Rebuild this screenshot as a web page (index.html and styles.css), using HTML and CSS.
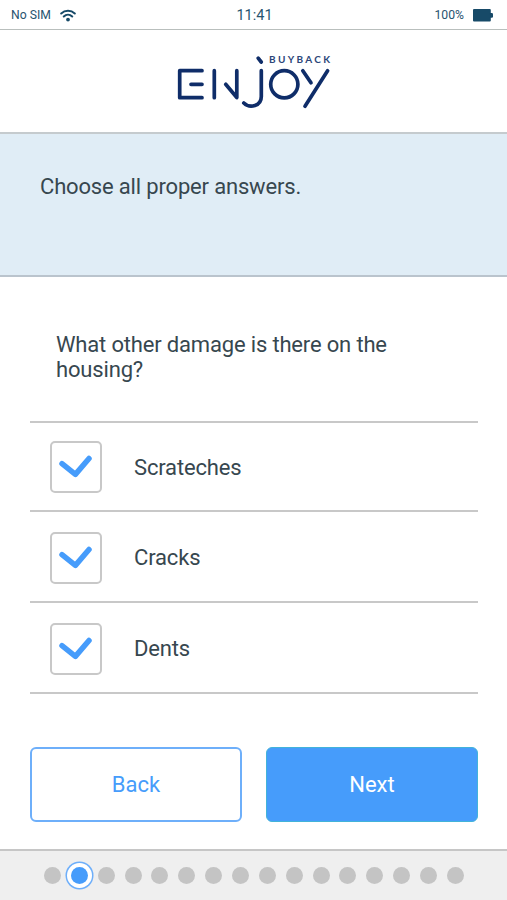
FILE: index.html
```html
<!DOCTYPE html>
<html lang="en">
<head>
    <title>Enjoy Buyback</title>
    <meta charset="utf-8">
    <meta name="viewport" content="width=device-width, initial-scale=1">
    <link rel="stylesheet" href="styles.css">
</head>
<body>
    <div class="status-bar">
        <div class="status-left">
            <span>No SIM</span>
            <svg class="wifi" width="16" height="13" viewBox="0 0 16 13">
                <path d="M1.2 4.5a10 10 0 0 1 13.6 0M3.8 7.5a6.2 6.2 0 0 1 8.4 0"/>
                <circle cx="8" cy="10.6" r="1.9"/>
            </svg>
        </div>
        <div class="status-time">11:41</div>
        <div class="status-right">
            <span>100%</span>
            <svg class="battery" width="20" height="13" viewBox="0 0 20 13">
                <rect x="0" y="0" width="17.8" height="12.6" rx="1"/>
                <rect x="16" y="4" width="4" height="4.8" rx="1.2"/>
            </svg>
        </div>
    </div>

    <div class="header">
        <svg class="logo" width="156" height="60" viewBox="176 52 156 60">
            <path d="M202 70.7H179.7V97.7H202M191 84.3H202"/>
            <path d="M214.3 70.7V97.7M225.7 84.3L236.8 97.5V70.7"/>
            <path d="M258.2 58.2L261.2 62M261.3 70.7V96.5C261.3 106 250 109 243.8 103"/>
            <circle cx="284.3" cy="84.3" r="13.6"/>
            <path d="M302.8 70.7L311 82.8M327.6 70.7L305 106.2"/>
            <text x="269" y="63.4" textLength="61">BUYBACK</text>
        </svg>
    </div>

    <div class="banner">Choose all proper answers.</div>

    <div class="main">
        <div class="question">What other damage is there on the housing?</div>
        <div class="list">
            <div class="item">
                <div class="check"><svg width="34" height="24" viewBox="0 0 34 24"><path d="M3 8.7L16.4 19.4L30 3.5"/></svg></div>
                <span>Scrateches</span>
            </div>
            <div class="item">
                <div class="check"><svg width="34" height="24" viewBox="0 0 34 24"><path d="M3 8.7L16.4 19.4L30 3.5"/></svg></div>
                <span>Cracks</span>
            </div>
            <div class="item">
                <div class="check"><svg width="34" height="24" viewBox="0 0 34 24"><path d="M3 8.7L16.4 19.4L30 3.5"/></svg></div>
                <span>Dents</span>
            </div>
        </div>
        <div class="buttons">
            <button class="btn">Back</button>
            <button class="btn next">Next</button>
        </div>
    </div>

    <div class="steps">
        <div class="dot"></div>
        <div class="dot active"></div>
        <div class="dot"></div>
        <div class="dot"></div>
        <div class="dot"></div>
        <div class="dot"></div>
        <div class="dot"></div>
        <div class="dot"></div>
        <div class="dot"></div>
        <div class="dot"></div>
        <div class="dot"></div>
        <div class="dot"></div>
        <div class="dot"></div>
        <div class="dot"></div>
        <div class="dot"></div>
        <div class="dot"></div>
    </div>
</body>
</html>
```
FILE: styles.css
```css
* {
    box-sizing: border-box;
}
body {
    margin: 0;
    height: 900px;
    display: flex;
    flex-direction: column;
    font-family: Roboto, "Liberation Sans", sans-serif;
    font-size: 22px;
    letter-spacing: -0.17px;
    color: #37474f;
    background-color: #fff;
}

/* status bar */
.status-bar {
    height: 30px;
    padding: 1px 14px 0 11px;
    display: grid;
    grid-template-columns: 1fr auto 1fr;
    align-items: center;
    border-bottom: 1px solid #b9bfbd;
    font-size: 12.2px;
    letter-spacing: 0;
    color: #27546f;
}
.status-left,
.status-right {
    display: flex;
    align-items: center;
    gap: 9px;
}
.status-right {
    justify-content: flex-end;
}
.status-time {
    padding-left: 5px;
    font-size: 14.5px;
}
.wifi path {
    fill: none;
    stroke: #174a68;
    stroke-width: 2;
    stroke-linecap: round;
}
.wifi circle,
.battery {
    fill: #174a68;
}

/* logo */
.header {
    height: 104px;
    padding-top: 22px;
    border-bottom: 2px solid #c5cbce;
    text-align: center;
}
.logo path,
.logo circle {
    fill: none;
    stroke: #0f2d69;
    stroke-width: 3.7;
    stroke-linecap: round;
    stroke-linejoin: round;
}
.logo text {
    fill: #2c4679;
    font-family: Lato, sans-serif;
    font-size: 10px;
    font-weight: bold;
}

.banner {
    height: 143px;
    padding: 40px 40px 0;
    line-height: 26px;
    background-color: #e0edf6;
    border-bottom: 2px solid #bac4cd;
}

/* question */
.main {
    flex: 1;
    padding: 55px 29px 0 30px;
}
.question {
    height: 89px;
    padding: 0 26px;
    line-height: 25px;
}
.list {
    border-top: 2px solid #c8c8c8;
}
.item {
    height: 91px;
    padding: 2px 0 0 20px;
    display: flex;
    align-items: center;
    gap: 32px;
    border-bottom: 2px solid #c8c8c8;
}
.item:first-child {
    height: 89px;
    padding-top: 1px;
}
.check {
    width: 52px;
    height: 52px;
    display: flex;
    align-items: center;
    justify-content: center;
    border: 2px solid #c8c8c8;
    border-radius: 5px;
}
.check path {
    fill: none;
    stroke: #469cfb;
    stroke-width: 5.5;
    stroke-linecap: round;
    stroke-linejoin: round;
}

.buttons {
    margin-top: 53px;
    display: flex;
    justify-content: space-between;
}
.btn {
    width: 212px;
    height: 75px;
    padding: 0;
    font: inherit;
    letter-spacing: 0;
    color: #469cfb;
    background-color: #fff;
    border: 2px solid #6eaffa;
    border-radius: 6px;
}
.next {
    color: #fff;
    background-color: #469cfb;
    border: 1px solid #43b3d9;
}

/* progress */
.steps {
    height: 51px;
    padding: 0 43px 0 44px;
    display: flex;
    align-items: center;
    justify-content: space-between;
    background-color: #efefef;
    border-top: 2px solid #c6c6c6;
}
.dot {
    width: 17px;
    height: 17px;
    border-radius: 50%;
    background-color: #c4c4c4;
}
.dot.active {
    background-color: #469cfb;
    box-shadow: 0 0 0 4px #fff, 0 0 0 5.5px #6eaffa;
}
```
